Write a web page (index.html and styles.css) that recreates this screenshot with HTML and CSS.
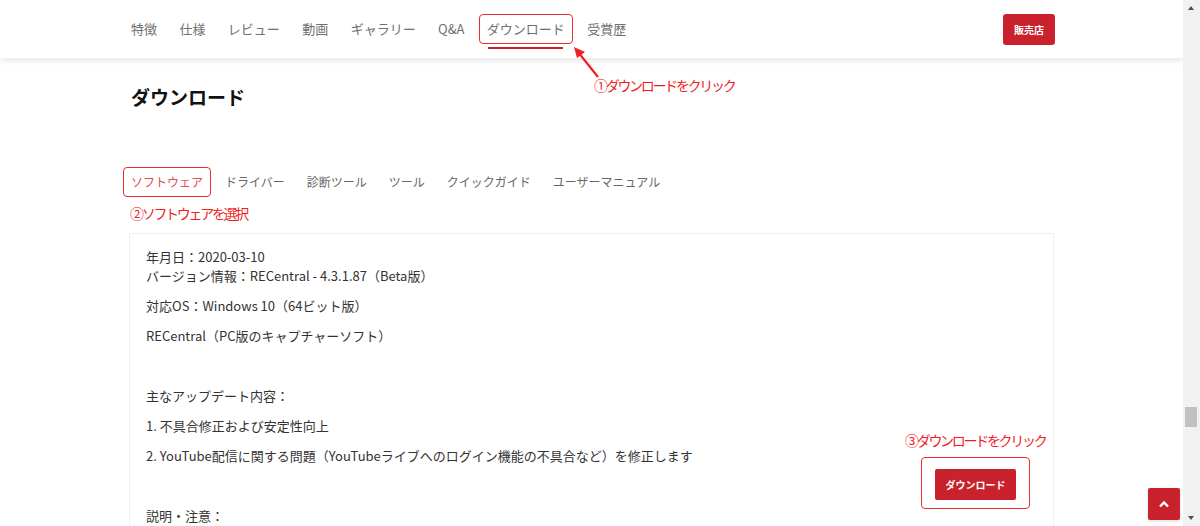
FILE: index.html
```html
<!DOCTYPE html>
<html lang="ja">
<head>
    <meta charset="UTF-8">
    <meta name="viewport" content="width=device-width, initial-scale=1.0">
    <title>ダウンロード</title>
    <link rel="stylesheet" href="styles.css">
</head>
<body>

<div class="page">
    <div class="header">
        <div class="container header-inner">
            <div class="nav">
                <a>特徴</a>
                <a>仕様</a>
                <a>レビュー</a>
                <a>動画</a>
                <a>ギャラリー</a>
                <a>Q&amp;A</a>
                <a class="active marked">ダウンロード</a>
                <a>受賞歴</a>
            </div>
            <button class="shop">販売店</button>
        </div>
        <div class="container">
            <div class="note note-1">
                <svg class="arrow" width="30" height="34" viewBox="0 0 30 34">
                    <line x1="26" y1="31" x2="6" y2="6" stroke="#f01e1e" stroke-width="2.2"/>
                    <polygon points="2,1 13,6 5,12" fill="#f01e1e"/>
                </svg>
                ①ダウンロードをクリック
            </div>
        </div>
    </div>

    <div class="container">
        <h1 class="title">ダウンロード</h1>

        <div class="tabs">
            <a class="tab active marked">ソフトウェア</a>
            <a class="tab">ドライバー</a>
            <a class="tab">診断ツール</a>
            <a class="tab">ツール</a>
            <a class="tab">クイックガイド</a>
            <a class="tab">ユーザーマニュアル</a>
        </div>
        <div class="note note-2">②ソフトウェアを選択</div>

        <div class="card">
            <div class="card-text">
                <p>年月日：2020-03-10<br>バージョン情報：RECentral - 4.3.1.87（Beta版）</p>
                <p>対応OS：Windows 10（64ビット版）</p>
                <p>RECentral（PC版のキャプチャーソフト）</p>
                <p>&nbsp;</p>
                <p>主なアップデート内容：</p>
                <p>1. 不具合修正および安定性向上</p>
                <p>2. YouTube配信に関する問題（YouTubeライブへのログイン機能の不具合など）を修正します</p>
                <p>&nbsp;</p>
                <p>説明・注意：</p>
            </div>
            <div class="card-side">
                <div class="dl-wrap">
                    <div class="note note-3">③ダウンロードをクリック</div>
                    <button class="dl">ダウンロード</button>
                </div>
            </div>
        </div>
    </div>
</div>

<button class="to-top">
    <svg width="12" height="8" viewBox="0 0 12 8"><polyline points="2,6.5 6,2.5 10,6.5" fill="none" stroke="#fff" stroke-width="2.4"/></svg>
</button>

<div class="scrollbar">
    <div class="sb-up"></div>
    <div class="sb-thumb"></div>
    <div class="sb-down"></div>
</div>

</body>
</html>
```

FILE: styles.css
```css
body {
    margin: 0;
    font-family: "Noto Sans CJK JP", "Noto Sans", sans-serif;
    background: #fff;
    color: #333;
    height: 526px;
    overflow: hidden;
}

.page {
    margin-right: 17px;
}

.container {
    width: 925px;
    margin: 0 auto;
    position: relative;
}

/* header */
.header {
    height: 58px;
    background: #fff;
    box-shadow: 0 3px 6px rgba(0, 0, 0, 0.09);
    position: relative;
}

.header-inner {
    display: flex;
    justify-content: space-between;
    align-items: center;
    height: 58px;
}

.nav {
    display: flex;
    gap: 22.4px;
    padding-left: 2px;
    height: 58px;
    align-items: center;
}

.nav a {
    font-size: 13px;
    color: #707070;
    position: relative;
    line-height: 20px;
}

.nav a.active::before {
    content: "";
    position: absolute;
    left: 1px;
    right: 2px;
    top: 28px;
    height: 2px;
    background: #c9222c;
}

.marked::after {
    content: "";
    position: absolute;
    left: -8px;
    right: -8px;
    top: -5px;
    bottom: -5px;
    border: 1.5px solid #f02a2a;
    border-radius: 4px;
}

.shop {
    width: 52px;
    height: 31px;
    margin-right: -1px;
    margin-top: 1px;
    border: none;
    border-radius: 3px;
    background: #c9222c;
    color: #fff;
    font-family: inherit;
    font-size: 10px;
    font-weight: bold;
    padding: 0;
}

/* red notes */
.note {
    color: #f01e1e;
    font-size: 14px;
    letter-spacing: -2.3px;
    line-height: 18px;
    white-space: nowrap;
}

.note-1 {
    position: absolute;
    left: 465px;
    top: 18px;
}

.arrow {
    position: absolute;
    left: -22px;
    top: -30px;
}

.note-2 {
    margin: 10px 0 0 1px;
}

/* content */
.title {
    font-size: 19px;
    font-weight: bold;
    color: #111;
    margin: 27px 0 0 2px;
    line-height: 24px;
}

.tabs {
    display: flex;
    gap: 22px;
    margin-top: 61px;
    padding-left: 2px;
}

.tab {
    font-size: 12px;
    color: #666;
    line-height: 24px;
    position: relative;
}

.tab.active {
    color: #e04a55;
}

.tab.marked::after {
    top: -3px;
    bottom: -3px;
}

.card {
    margin-top: 11px;
    border: 1px solid #efefef;
    border-bottom: none;
    display: flex;
    justify-content: space-between;
    height: 292px;
    overflow: hidden;
}

.card-text {
    padding: 13px 16px;
    font-size: 13px;
    line-height: 19px;
    color: #333;
}

.card-text p {
    margin: 0 0 11px;
}

.card-side {
    padding: 235px 37px 0 0;
}

.dl-wrap {
    position: relative;
}

.dl {
    width: 81px;
    height: 31px;
    border: none;
    border-radius: 2px;
    background: #c9222c;
    color: #fff;
    font-family: inherit;
    font-size: 10px;
    font-weight: bold;
    padding: 0;
}

.dl-wrap::after {
    content: "";
    position: absolute;
    left: -14px;
    right: -14px;
    top: -12px;
    bottom: -9px;
    border: 1.5px solid #f02a2a;
    border-radius: 4px;
}

.note-3 {
    position: absolute;
    left: -30px;
    top: -38px;
}

/* fixed bits */
.to-top {
    position: fixed;
    left: 1148px;
    top: 488px;
    width: 32px;
    height: 32px;
    border: none;
    border-radius: 2px;
    background: #c9222c;
    padding: 0;
    display: flex;
    align-items: center;
    justify-content: center;
    box-shadow: 0 1px 3px rgba(0, 0, 0, 0.15);
}

.scrollbar {
    position: fixed;
    right: 0;
    top: 0;
    width: 17px;
    height: 526px;
    background: #f1f1f1;
}

.sb-thumb {
    position: absolute;
    left: 2px;
    top: 407px;
    width: 12px;
    height: 20px;
    background: #c1c1c1;
}

.sb-up,
.sb-down {
    position: absolute;
    left: 5px;
    width: 0;
    height: 0;
    border-left: 3.5px solid transparent;
    border-right: 3.5px solid transparent;
}

.sb-up {
    top: 6px;
    border-bottom: 4px solid #505050;
}

.sb-down {
    bottom: 6px;
    border-top: 4px solid #505050;
}
```
